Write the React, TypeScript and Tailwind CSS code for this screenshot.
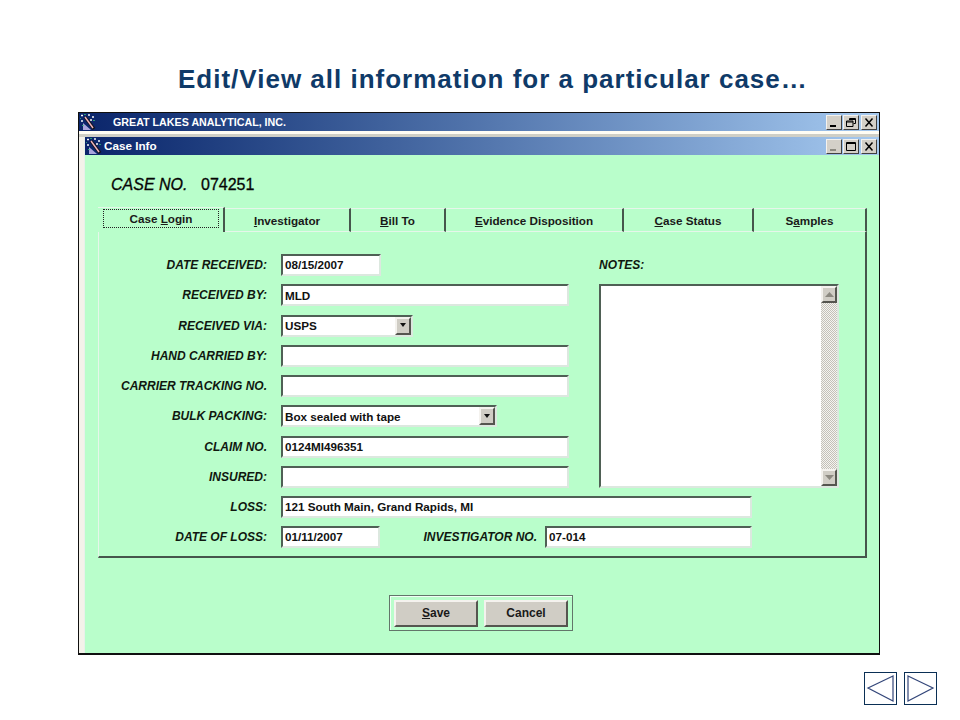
import type { ReactNode } from 'react';

const sunken = 'border-2 border-t-[#4f6055] border-l-[#4f6055] border-r-[#dce8df] border-b-[#dce8df] bg-white';
const raised = 'border-2 border-t-[#f4f2ee] border-l-[#f4f2ee] border-r-[#55554f] border-b-[#55554f] bg-[#d0cdc5]';

const AppIcon = () => (
  <svg width="18" height="17" viewBox="0 0 18 17">
    <path d="M3 9 L11 16 L3 16 Z" fill="#a9a4dc" />
    <path d="M5 3 L14 15" stroke="#141420" strokeWidth="3.4" />
    <path d="M5 3 L13 14" stroke="#f0b4bc" strokeWidth="1.4" />
    <path d="M1 1.5h2M8 1h2M12 3h2M1 7h2M10 6h2" stroke="#f6f6f6" strokeWidth="1.4" />
    <path d="M5 0v1M14 6v1M0 4v1M3 11v1" stroke="#38c878" strokeWidth="1.4" />
  </svg>
);

const WinButton = ({ kind, dim }: { kind: string; dim?: boolean }) => (
  <div className="w-[16px] h-[15px] flex items-center justify-center border border-t-[#f4f2ee] border-l-[#f4f2ee] border-r-[#404040] border-b-[#404040] bg-[#d4d0c8]">
    <svg width="12" height="11" viewBox="0 0 12 11" fill="none" stroke={dim ? '#8c8980' : '#000'}>
      {kind === 'min' && <path d="M2 9h6" strokeWidth="2" />}
      {kind === 'max' && <path d="M1.5 1.5h9v8h-9z M1.5 2.5h9" />}
      {kind === 'restore' && <path d="M4.5 3v-1.5h6v5h-2 M1.5 4h6.5v5.5h-6.5z M4.5 2.5h6 M1.5 5h6.5" stroke="#000" />}
      {kind === 'close' && <path d="M2.5 1.5l7 8M9.5 1.5l-7 8" stroke="#000" strokeWidth="1.5" />}
    </svg>
  </div>
);

const Label = ({ children, className = 'w-[168px]' }: { children: ReactNode; className?: string }) => (
  <div className={`${className} text-right italic font-bold text-[12px] text-[#101810]`}>{children}</div>
);

const Field = ({ value = '', width }: { value?: string; width: string }) => (
  <div className={`${width} h-[22px] ${sunken} flex items-center pl-[2px] text-[11.7px] font-bold text-[#111]`}>{value}</div>
);

const Select = ({ value, width }: { value: string; width: string }) => (
  <div className={`${width} h-[22px] ${sunken} flex items-center justify-between pl-[2px] text-[11.7px] font-bold text-[#111]`}>
    {value}
    <div className={`w-[16px] h-[18px] ${raised} flex items-center justify-center`}>
      <svg width="8" height="5" viewBox="0 0 8 5"><path d="M1 0h6L4 4z" fill="#111" /></svg>
    </div>
  </div>
);

const Row = ({ label, children }: { label: string; children: ReactNode }) => (
  <div className="flex items-center gap-[14px] h-[22px]">
    <Label>{label}</Label>
    {children}
  </div>
);

const tabs: { w: string; label: ReactNode }[] = [
  { w: 'w-[126px]', label: <><u>I</u>nvestigator</> },
  { w: 'w-[95px]', label: <><u>B</u>ill To</> },
  { w: 'w-[178px]', label: <><u>E</u>vidence Disposition</> },
  { w: 'w-[130px]', label: <><u>C</u>ase Status</> },
  { w: 'w-[113px]', label: <>S<u>a</u>mples</> },
];

const ScrollArrow = ({ up }: { up?: boolean }) => (
  <div className={`w-[16px] h-[17px] ${raised} flex items-center justify-center`}>
    <svg width="9" height="5" viewBox="0 0 9 5">
      <path d={up ? 'M0 5h9L4.5 0z' : 'M0 0h9L4.5 5z'} fill="#8c8980" />
    </svg>
  </div>
);

const NavButton = ({ points }: { points: string }) => (
  <div className="w-[33px] h-[33px] border border-[#0a2f55] bg-white">
    <svg width="31" height="31" viewBox="0 0 31 31" fill="none" stroke="#34477a" strokeWidth="1.2">
      <polygon points={points} />
    </svg>
  </div>
);

export default function App() {
  return (
    <div className="w-[960px] h-[720px] bg-white overflow-hidden font-['Liberation_Sans',Arial,sans-serif]">
      <h1 className="mt-[64px] pl-[178px] h-[30px] leading-[30px] text-[26px] font-bold text-[#0f3a68] tracking-[1px] whitespace-nowrap">
        Edit/View all information for a particular case…
      </h1>

      {/* outer app window */}
      <div className="ml-[78px] mt-[18px] w-[802px] h-[543px] border border-[#101010] border-b-2 bg-[#f4f2ea] flex flex-col">
        <div className="h-[18px] shrink-0 flex items-center bg-gradient-to-r from-[#0a246a] to-[#a6caf0] pr-[2px]">
          <div className="ml-[1px] w-[33px]"><AppIcon /></div>
          <span className="text-white font-bold text-[10.7px]">GREAT LAKES ANALYTICAL, INC.</span>
          <div className="ml-auto flex">
            <WinButton kind="min" />
            <div className="w-[1px]" />
            <WinButton kind="restore" />
            <div className="w-[2px]" />
            <WinButton kind="close" />
          </div>
        </div>
        <div className="h-[6px] shrink-0 border-t-[3px] border-[#fffdf4] bg-[#cfcfc6]" />

        {/* inner case window */}
        <div className="ml-[5px] flex-1 border-l border-[#e8f0ea] flex flex-col bg-[#b9fecb]">
          <div className="h-[18px] shrink-0 flex items-center bg-gradient-to-r from-[#0a246a] to-[#a6caf0] pr-[2px]">
            <div className="ml-[1px]"><AppIcon /></div>
            <span className="text-white font-bold text-[11.7px]">Case Info</span>
            <div className="ml-auto flex">
              <WinButton kind="min" dim />
              <div className="w-[1px]" />
              <WinButton kind="max" />
              <div className="w-[2px]" />
              <WinButton kind="close" />
            </div>
          </div>

          <div className="flex-1 pl-[13px] pr-[12px]">
            <div className="mt-[21px] ml-[13px] h-[18px] flex items-center text-[16px] text-[#050505] [-webkit-text-stroke:0.3px_#050505]">
              <span className="italic w-[90px]">CASE NO.</span>
              <span>074251</span>
            </div>

            {/* tab strip */}
            <div className="mt-[13px] flex h-[25px] w-[769px]">
              <div className="w-[127px] border-r-2 border-[#46564c] border-t border-t-[#e6f6ea] pl-[5px] pt-[1px]">
                <div className="w-[116px] h-[19px] border border-dotted border-[#222] flex items-center justify-center text-[11.7px] font-bold text-[#1a1a1a]">
                  <span>Case <u>L</u>ogin</span>
                </div>
              </div>
              {tabs.map((tab, i) => (
                <div
                  key={i}
                  className={`${tab.w} mt-[1px] pt-[2px] border-r-2 border-[#46564c] border-t border-t-[#e6f6ea] border-b border-b-[#e6f6ea] flex items-center justify-center text-[11.7px] font-bold text-[#1a1a1a]`}
                >
                  <span>{tab.label}</span>
                </div>
              ))}
            </div>

            {/* tab panel */}
            <div className="w-[769px] h-[326px] border-l border-l-[#e6f6ea] border-r-2 border-r-[#46564c] border-b-2 border-b-[#46564c] pt-[22px]">
              <div className="flex">
                <div className="flex flex-col gap-[8.3px] w-[500px]">
                  <Row label="DATE RECEIVED:"><Field value="08/15/2007" width="w-[100px]" /></Row>
                  <Row label="RECEIVED BY:"><Field value="MLD" width="w-[288px]" /></Row>
                  <Row label="RECEIVED VIA:"><Select value="USPS" width="w-[132px]" /></Row>
                  <Row label="HAND CARRIED BY:"><Field width="w-[288px]" /></Row>
                  <Row label="CARRIER TRACKING NO."><Field width="w-[288px]" /></Row>
                  <Row label="BULK PACKING:"><Select value="Box sealed with tape" width="w-[216px]" /></Row>
                  <Row label="CLAIM NO."><Field value="0124MI496351" width="w-[288px]" /></Row>
                  <Row label="INSURED:"><Field width="w-[288px]" /></Row>
                </div>
                <div>
                  <div className="h-[22px] flex items-center italic font-bold text-[12px] text-[#101810]">NOTES:</div>
                  <div className={`mt-[8px] w-[240px] h-[204px] ${sunken} flex justify-end`}>
                    <div className="w-[16px] h-full flex flex-col justify-between bg-[repeating-conic-gradient(#c4c0b8_0_25%,#f4f4f0_0_50%)] bg-[length:2px_2px]">
                      <ScrollArrow up />
                      <ScrollArrow />
                    </div>
                  </div>
                </div>
              </div>

              <div className="mt-[8px]">
                <Row label="LOSS:"><Field value="121 South Main, Grand Rapids, MI" width="w-[471px]" /></Row>
              </div>
              <div className="mt-[8px] flex items-center h-[22px]">
                <Label>DATE OF LOSS:</Label>
                <div className="w-[14px]" />
                <Field value="01/11/2007" width="w-[99px]" />
                <Label className="w-[157px]">INVESTIGATOR NO.</Label>
                <div className="w-[8px]" />
                <Field value="07-014" width="w-[207px]" />
              </div>
            </div>

            {/* save / cancel */}
            <div className="mt-[37px] ml-[291px] w-[184px] h-[36px] border border-[#62766a] flex items-center justify-center gap-[6px] shadow-[inset_1px_1px_0_#f0fff4]">
              <div className={`w-[84px] h-[27px] ${raised} flex items-center justify-center text-[12px] font-bold text-[#1a1a1a]`}>
                <span><u>S</u>ave</span>
              </div>
              <div className={`w-[84px] h-[27px] ${raised} flex items-center justify-center text-[12px] font-bold text-[#1a1a1a]`}>
                Cancel
              </div>
            </div>
          </div>
        </div>
      </div>

      <div className="mt-[17px] pl-[864px] flex gap-[7px]">
        <NavButton points="28,3 3,15 28,28" />
        <NavButton points="3,3 28,15 3,28" />
      </div>
    </div>
  );
}
